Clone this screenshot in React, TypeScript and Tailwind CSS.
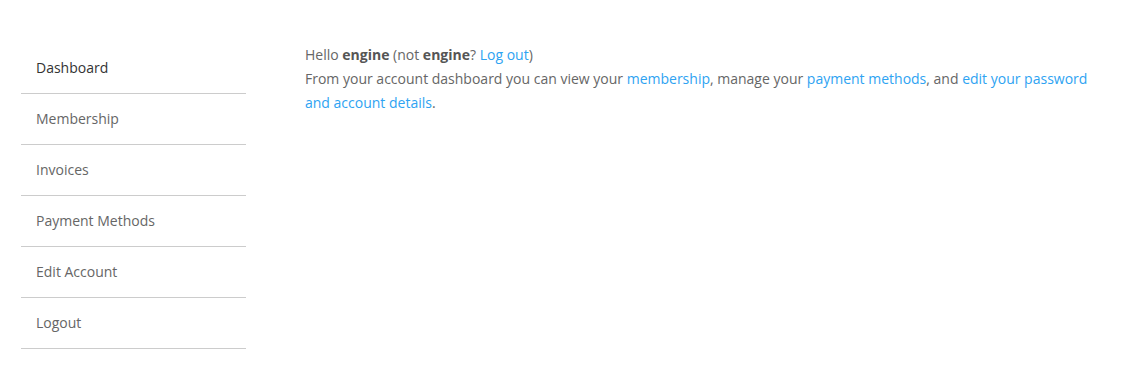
export default function App() {
  const items = ['Dashboard', 'Membership', 'Invoices', 'Payment Methods', 'Edit Account', 'Logout'];
  return (
    <div className="flex w-[1125px] h-[381px] bg-white pt-[43px] pl-[21px] text-[14px] leading-[24px] text-[#666] font-['Open_Sans',sans-serif]">
      <nav className="w-[225px] shrink-0">
        <ul>
          {items.map((item, i) => (
            <li key={item} className="h-[51px] pt-[13px] pl-[15px] border-b border-[#ccc]">
              <a href="#" className={i === 0 ? 'text-[#333]' : 'text-[#666]'}>
                {item}
              </a>
            </li>
          ))}
        </ul>
      </nav>
      <div className="ml-[59px] w-[800px]">
        <p>
          Hello <strong className="font-bold text-[#555]">engine</strong> (not{' '}
          <strong className="font-bold text-[#555]">engine</strong>?{' '}
          <a href="#" className="text-[#2ea3f2]">Log out</a>)
        </p>
        <p>
          From your account dashboard you can view your{' '}
          <a href="#" className="text-[#2ea3f2]">membership</a>, manage your{' '}
          <a href="#" className="text-[#2ea3f2]">payment methods</a>, and{' '}
          <a href="#" className="text-[#2ea3f2]">edit your password and account details</a>.
        </p>
      </div>
    </div>
  );
}
